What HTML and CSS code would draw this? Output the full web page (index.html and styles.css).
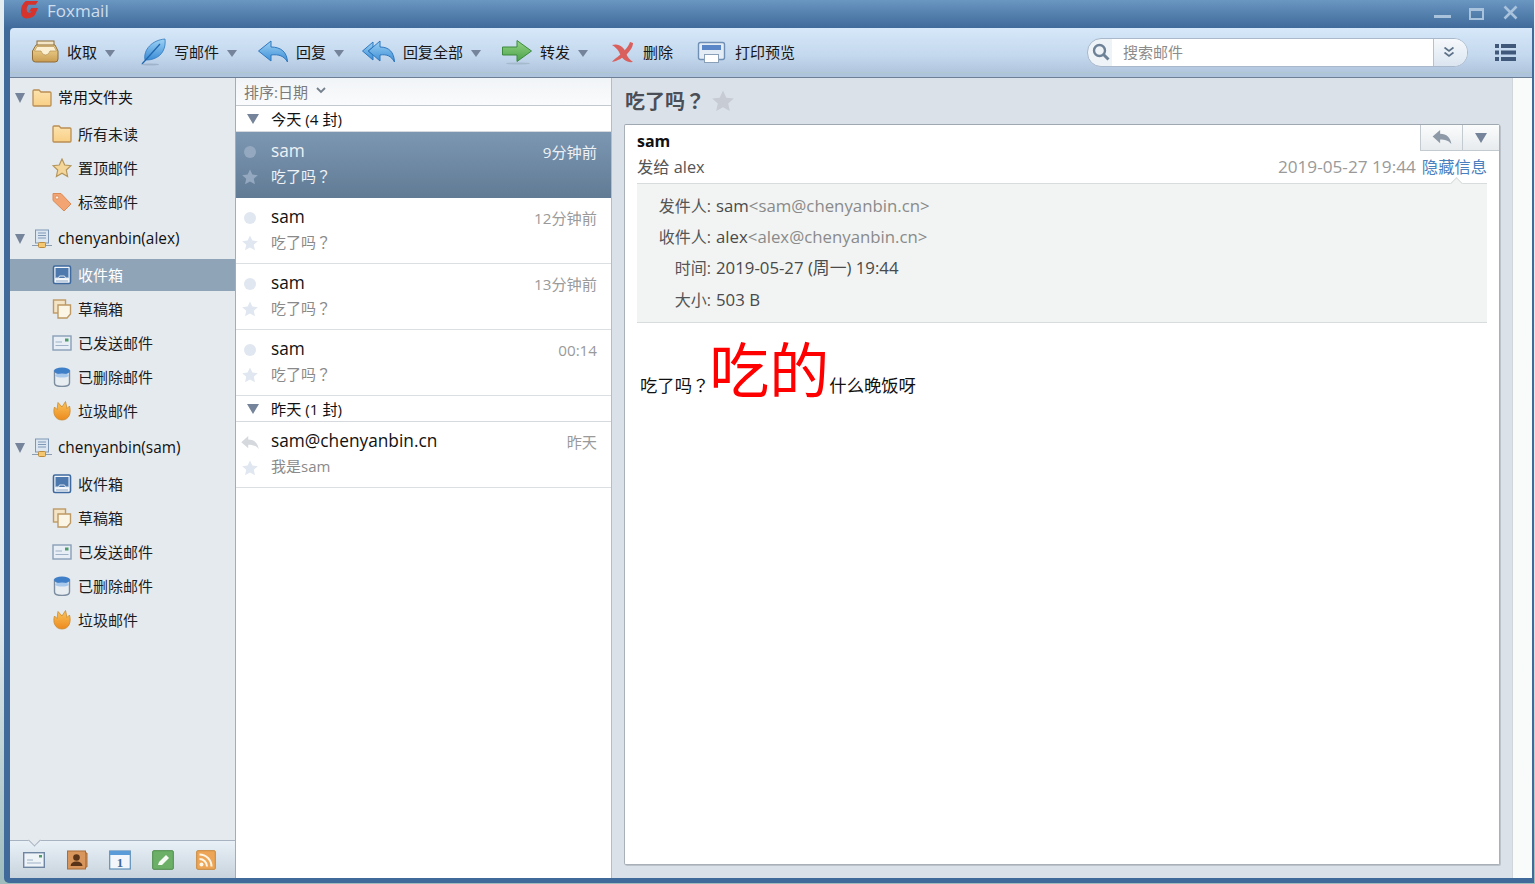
FILE: index.html
```html
<!DOCTYPE html>
<html lang="zh-CN">
<head>
	<title>Foxmail</title>
	<meta charset="utf-8">
	<link rel="stylesheet" href="styles.css">
</head>
<body>
	<svg class="sprite" aria-hidden="true">
		<defs>
			<linearGradient id="g-tan" x1="0" y1="0" x2="0" y2="1"><stop offset="0" stop-color="#f6dc98"/><stop offset="1" stop-color="#c99c52"/></linearGradient>
			<linearGradient id="g-folder" x1="0" y1="0" x2="0" y2="1"><stop offset="0" stop-color="#fde3ae"/><stop offset="1" stop-color="#f8cf85"/></linearGradient>
			<linearGradient id="g-blue" x1="0" y1="0" x2="0" y2="1"><stop offset="0" stop-color="#9dd2f4"/><stop offset="1" stop-color="#3a8cd6"/></linearGradient>
			<linearGradient id="g-green" x1="0" y1="0" x2="0" y2="1"><stop offset="0" stop-color="#93d585"/><stop offset="1" stop-color="#4aa04a"/></linearGradient>
			<linearGradient id="g-orange" x1="0" y1="0" x2="0" y2="1"><stop offset="0" stop-color="#fbc45a"/><stop offset="1" stop-color="#ec8a1e"/></linearGradient>
		</defs>
		<symbol id="t-tray" viewBox="0 0 28 28">
			<rect x="6" y="3" width="17" height="5" fill="#f3e6c6" stroke="#8f6d38"/>
			<path d="M1.500 13 L5 7 H24 L27 13 V21 Q27 24 24 24 H4.500 Q1.500 24 1.500 21Z" fill="url(#g-tan)" stroke="#8f6d38"/>
			<path d="M6 8.500 H23 L25.500 13 H19 Q18 17 14.500 17 Q11 17 10 13 H3.500Z" fill="#fbf0d2" stroke="#a98448" stroke-width=".6"/>
		</symbol>
		<symbol id="t-feather" viewBox="0 0 33 28">
			<path d="M12 22 C10 12 19 2 32 1 C33 9 30 18 20 21 C17 22 14 22 12 22Z" fill="url(#g-blue)" stroke="#2f78bf" stroke-width=".8"/>
			<path d="M9 26 L27 6" stroke="#1f66ad" stroke-width="1.200" fill="none"/>
			<ellipse cx="17" cy="26.500" rx="9" ry="1" fill="#9fb4cb"/>
		</symbol>
		<symbol id="t-reply" viewBox="0 0 33 28">
			<path d="M3.500 13 L16 3 V9 C26 9 32 14 32.500 24 C29 18 24 16 16 17 V23Z" fill="url(#g-blue)" stroke="#2f78bf"/>
		</symbol>
		<symbol id="t-replyall" viewBox="0 0 33 28">
			<path d="M.5 13 L11 4 V9 L6 13 L11 17 V22Z" fill="url(#g-blue)" stroke="#2f78bf"/>
			<path d="M6.500 13 L18 3 V9 C27 9 32 14 32.500 24 C29 18 25 16 18 17 V23Z" fill="url(#g-blue)" stroke="#2f78bf"/>
		</symbol>
		<symbol id="t-forward" viewBox="0 0 33 28">
			<path d="M3.500 9 H18 V2.500 L32.500 13 L18 23.500 V17 H3.500Z" fill="url(#g-green)" stroke="#3d8a3f"/>
			<ellipse cx="19" cy="25.500" rx="12" ry="1" fill="#a6bace"/>
		</symbol>
		<symbol id="t-delete" viewBox="0 0 29 28">
			<path d="M6 7 C13 5 18 9 20 15 C21 19 24 22 27 24 C21 25 16 21 14 16 C12 11 9 9 6 7Z" fill="#d9605d"/>
			<path d="M27 5 C27 12 17 22 6 24 C9 20 14 18 18 13 C21 10 23 7 24 4Z" fill="#d9605d"/>
		</symbol>
		<symbol id="t-print" viewBox="0 0 36 28">
			<rect x="7.500" y="4.500" width="26" height="17" rx="2" fill="#e4ecf5" stroke="#6f8fb5" stroke-width="1.400"/>
			<rect x="11" y="7" width="19" height="5" fill="#5a86c8"/>
			<rect x="13.500" y="16.500" width="14" height="8" fill="#fff" stroke="#8a9fb8"/>
		</symbol>
		<symbol id="i-folder" viewBox="0 0 20 20">
			<path d="M1 17 V3 Q1 2 2 2 H7 L9 4 H18 Q19 4 19 5 V17 Q19 18 18 18 H2 Q1 18 1 17Z" fill="url(#g-folder)" stroke="#b98f55" stroke-width="1.300"/>
		</symbol>
		<symbol id="i-star" viewBox="0 0 20 20">
			<path d="M10 1 L12.700 7 L19 7.700 L14.300 12 L15.600 18.500 L10 15.200 L4.400 18.500 L5.700 12 L1 7.700 L7.300 7Z" fill="#f4d69a" stroke="#b4965c" stroke-width="1.200"/>
		</symbol>
		<symbol id="i-tag" viewBox="0 0 20 20">
			<path d="M1 1.500 H9 L19 12 L12 19 L1 8.500Z" fill="#f2a473" stroke="#d98b58"/>
			<circle cx="5" cy="5.500" r="1.600" fill="#fff3e6" stroke="#c9794a" stroke-width=".6"/>
		</symbol>
		<symbol id="i-server" viewBox="0 0 20 20">
			<rect x="3.500" y="1" width="13" height="13" fill="#dbe6f1" stroke="#7e98b6"/>
			<path d="M6 4 H14 M6 6.500 H14 M6 9 H14" stroke="#7e98b6"/>
			<path d="M0 16.500 H20" stroke="#8b9db0"/>
			<rect x="6.500" y="13.500" width="7" height="5" rx="1" fill="#f4c873" stroke="#bb8c3d"/>
		</symbol>
		<symbol id="i-inbox" viewBox="0 0 20 20">
			<rect x="1.500" y="1" width="17" height="17.500" rx="1.500" fill="#f3f6fa" stroke="#3f6a9f" stroke-width="1.600"/>
			<rect x="3.500" y="3" width="13" height="10" fill="#4d78ad"/>
			<path d="M3.500 13 H6.500 L7.500 11 H12.500 L13.500 13 H16.500" stroke="#dbe5f0" fill="none"/>
			<path d="M4 16 H16" stroke="#8fa9c6"/>
		</symbol>
		<symbol id="i-draft" viewBox="0 0 20 20">
			<rect x="1.500" y="1" width="12" height="13" fill="#f4e4c6" stroke="#bd9964" stroke-width="1.400"/>
			<path d="M6 6 H18.500 V15 L15 19 H6Z" fill="#fbf5e6" stroke="#bd9964" stroke-width="1.400"/>
		</symbol>
		<symbol id="i-sent" viewBox="0 0 20 20">
			<rect x="1" y="3" width="18" height="14" fill="#e8eef5" stroke="#8a9fb8" stroke-width="1.400"/>
			<rect x="13" y="5.500" width="3.500" height="3" fill="#4f9a6a"/>
			<path d="M3.500 9 H10 M3.500 12.500 H16.500" stroke="#9fb2c7"/>
		</symbol>
		<symbol id="i-trash" viewBox="0 0 20 20">
			<path d="M2.500 4 V16 Q2.500 19.500 10 19.500 Q17.500 19.500 17.500 16 V4Z" fill="#e8edf2" stroke="#7c8da0" stroke-width="1.400"/>
			<ellipse cx="10" cy="4" rx="8" ry="3.400" fill="#3f7fc8"/>
			<ellipse cx="10" cy="8.500" rx="7" ry="2" fill="#a9c9ec"/>
		</symbol>
		<symbol id="i-flame" viewBox="0 0 20 20">
			<path d="M2.500 6 L5 8.500 L6 1.500 L10 6 L13.500 .5 L15 7.500 L17.500 5 C19.500 12 17 19 10 19 C3 19 .5 12 2.500 6Z" fill="url(#g-orange)" stroke="#c98a30" stroke-width=".8"/>
		</symbol>
		<symbol id="s-star" viewBox="0 0 20 20">
			<path d="M10 .5 L13 7 L19.800 7.700 L14.700 12.300 L16.200 19.200 L10 15.700 L3.800 19.200 L5.300 12.300 L.2 7.700 L7 7Z"/>
		</symbol>
		<symbol id="s-back" viewBox="0 0 20 16">
			<path d="M0 7 L8 0 V4 C15 4 19 8 20 15 C17 11 13 10 8 10 V14Z"/>
		</symbol>
	</svg>

	<div class="window">
		<header class="titlebar">
			<svg class="logo" viewBox="0 0 20 20">
				<path d="M6 1 H19 L16.500 5 H9 Q6 8.500 7.500 12 Q9.500 15 12.500 12 H9.500 L12 8.500 H19 L15.500 16 Q12 19.500 6 19.500 Q1 18.500 1 12 Q1 5 6 1Z" fill="#d5332b"/>
			</svg>
			<span class="apptitle">Foxmail</span>
			<div class="winbtns">
				<i class="win-min"></i>
				<i class="win-max"></i>
				<svg class="win-close" viewBox="0 0 15 15"><path d="M1.500 1.500 L13.500 13.500 M13.500 1.500 L1.500 13.500" stroke="#a9c3dd" stroke-width="2.600"/></svg>
			</div>
		</header>

		<div class="toolbar">
			<div class="tool"><svg class="ti w28"><use href="#t-tray"/></svg><span>收取</span><i class="caret"></i></div>
			<div class="tool"><svg class="ti w33"><use href="#t-feather"/></svg><span>写邮件</span><i class="caret"></i></div>
			<div class="tool"><svg class="ti w33"><use href="#t-reply"/></svg><span>回复</span><i class="caret"></i></div>
			<div class="tool"><svg class="ti w33"><use href="#t-replyall"/></svg><span>回复全部</span><i class="caret"></i></div>
			<div class="tool"><svg class="ti w33"><use href="#t-forward"/></svg><span>转发</span><i class="caret"></i></div>
			<div class="tool"><svg class="ti w29"><use href="#t-delete"/></svg><span>删除</span></div>
			<div class="tool"><svg class="ti w36"><use href="#t-print"/></svg><span>打印预览</span></div>
			<div class="search">
				<div class="search-ico">
					<svg viewBox="0 0 18 18"><circle cx="7.500" cy="7.500" r="5.500" fill="none" stroke="#6d8296" stroke-width="2.400"/><path d="M11.500 11.500 L16.500 16.500" stroke="#6d8296" stroke-width="3"/></svg>
				</div>
				<div class="search-input">搜索邮件</div>
				<div class="search-more">
					<svg viewBox="0 0 12 12"><path d="M1.500 1.500 L6 5 L10.500 1.500 M1.500 6.500 L6 10 L10.500 6.500" fill="none" stroke="#5b7187" stroke-width="1.600"/></svg>
				</div>
			</div>
			<svg class="menu-ico" viewBox="0 0 21 17"><path d="M0 0 H4 V4 H0Z M6 0 H21 V4 H6Z M0 6.500 H4 V10.500 H0Z M6 6.500 H21 V10.500 H6Z M0 13 H4 V17 H0Z M6 13 H21 V17 H6Z" fill="#40597a"/></svg>
		</div>

		<div class="main">
			<aside class="sidebar">
				<div class="tree">
					<div class="acct fav"><i class="tri"></i><svg class="ic"><use href="#i-folder"/></svg><span>常用文件夹</span></div>
					<div class="node"><svg class="ic"><use href="#i-folder"/></svg><span>所有未读</span></div>
					<div class="node"><svg class="ic"><use href="#i-star"/></svg><span>置顶邮件</span></div>
					<div class="node"><svg class="ic"><use href="#i-tag"/></svg><span>标签邮件</span></div>

					<div class="acct"><i class="tri"></i><svg class="ic"><use href="#i-server"/></svg><span>chenyanbin(alex)</span></div>
					<div class="node active"><svg class="ic"><use href="#i-inbox"/></svg><span>收件箱</span></div>
					<div class="node"><svg class="ic"><use href="#i-draft"/></svg><span>草稿箱</span></div>
					<div class="node"><svg class="ic"><use href="#i-sent"/></svg><span>已发送邮件</span></div>
					<div class="node"><svg class="ic"><use href="#i-trash"/></svg><span>已删除邮件</span></div>
					<div class="node"><svg class="ic"><use href="#i-flame"/></svg><span>垃圾邮件</span></div>

					<div class="acct"><i class="tri"></i><svg class="ic"><use href="#i-server"/></svg><span>chenyanbin(sam)</span></div>
					<div class="node"><svg class="ic"><use href="#i-inbox"/></svg><span>收件箱</span></div>
					<div class="node"><svg class="ic"><use href="#i-draft"/></svg><span>草稿箱</span></div>
					<div class="node"><svg class="ic"><use href="#i-sent"/></svg><span>已发送邮件</span></div>
					<div class="node"><svg class="ic"><use href="#i-trash"/></svg><span>已删除邮件</span></div>
					<div class="node"><svg class="ic"><use href="#i-flame"/></svg><span>垃圾邮件</span></div>
				</div>
				<div class="modules">
					<svg class="mod" viewBox="0 0 22 18"><rect x=".7" y="1.700" width="20.600" height="14.600" fill="#eef3f8" stroke="#6f86a3" stroke-width="1.400"/><rect x="16" y="4" width="3" height="2.500" fill="#4f9a6a"/><path d="M4 9 H10 M4 12 H18" stroke="#9fb2c7"/></svg>
					<svg class="mod" viewBox="0 0 22 20"><rect x="1.500" y="1" width="18" height="18" fill="#d9965c" stroke="#a86d38"/><path d="M19.500 3 H21 V17 H19.500" fill="#c98a52" stroke="#a86d38"/><circle cx="10.500" cy="7.500" r="3.300" fill="#5a3418"/><path d="M4.500 16 Q5 11.500 10.500 11.500 Q16 11.500 16.500 16Z" fill="#5a3418"/></svg>
					<svg class="mod" viewBox="0 0 22 20"><rect x=".7" y="1" width="20.600" height="18" fill="#f3f7fb" stroke="#5f8fb8" stroke-width="1.200"/><rect x="1" y="1" width="20" height="4" fill="#5b9bd8"/><text class="cal-num" x="11" y="17">1</text></svg>
					<svg class="mod" viewBox="0 0 22 20"><rect x=".7" y=".7" width="20.600" height="18.600" rx="1" fill="#6cb068" stroke="#4a8a48"/><path d="M6 15 L7 12 L14 5 L17 8 L10 15Z" fill="#f6fbf4"/></svg>
					<svg class="mod" viewBox="0 0 20 20"><rect x=".7" y=".7" width="18.600" height="18.600" rx="1" fill="#eda658" stroke="#c98638"/><circle cx="5.500" cy="14.500" r="2" fill="#fff6e6"/><path d="M3.500 9 A7.500 7.500 0 0 1 11 16.500 M3.500 4.500 A12 12 0 0 1 15.500 16.500" fill="none" stroke="#fff6e6" stroke-width="2"/></svg>
				</div>
			</aside>

			<section class="list">
				<div class="sortbar">排序:日期<svg viewBox="0 0 10 7"><path d="M1 1 L5 5 L9 1" fill="none" stroke="#75808c" stroke-width="1.800"/></svg></div>

				<div class="group"><i class="tri"></i><span>今天 (4 封)</span></div>
				<div class="msg selected">
					<div class="msg-marks"><i class="dot"></i><svg class="star"><use href="#s-star"/></svg></div>
					<div class="msg-text"><div class="from">sam</div><div class="subj q" lang="zh-TW">吃了吗？</div></div>
					<div class="when">9分钟前</div>
				</div>
				<div class="msg">
					<div class="msg-marks"><i class="dot"></i><svg class="star"><use href="#s-star"/></svg></div>
					<div class="msg-text"><div class="from">sam</div><div class="subj q" lang="zh-TW">吃了吗？</div></div>
					<div class="when">12分钟前</div>
				</div>
				<div class="msg">
					<div class="msg-marks"><i class="dot"></i><svg class="star"><use href="#s-star"/></svg></div>
					<div class="msg-text"><div class="from">sam</div><div class="subj q" lang="zh-TW">吃了吗？</div></div>
					<div class="when">13分钟前</div>
				</div>
				<div class="msg">
					<div class="msg-marks"><i class="dot"></i><svg class="star"><use href="#s-star"/></svg></div>
					<div class="msg-text"><div class="from">sam</div><div class="subj q" lang="zh-TW">吃了吗？</div></div>
					<div class="when">00:14</div>
				</div>

				<div class="group"><i class="tri"></i><span>昨天 (1 封)</span></div>
				<div class="msg">
					<div class="msg-marks"><svg class="replied"><use href="#s-back"/></svg><svg class="star"><use href="#s-star"/></svg></div>
					<div class="msg-text"><div class="from">sam@chenyanbin.cn</div><div class="subj">我是sam</div></div>
					<div class="when">昨天</div>
				</div>
			</section>

			<section class="reader">
				<div class="reader-head">
					<h1 class="q" lang="zh-TW">吃了吗？</h1>
					<svg class="head-star"><use href="#s-star"/></svg>
				</div>
				<article class="card">
					<div class="card-top">
						<b class="sender">sam</b>
						<div class="card-actions">
							<div class="act act-reply"><svg><use href="#s-back"/></svg></div>
							<div class="act act-more"><i></i></div>
						</div>
					</div>
					<div class="card-meta">
						<span>发给 alex</span>
						<span class="stamp">2019-05-27 19:44</span>
						<a class="hide-link">隐藏信息</a>
					</div>
					<div class="details">
						<span class="k">发件人:</span><span class="v">sam<em>&lt;sam@chenyanbin.cn&gt;</em></span>
						<span class="k">收件人:</span><span class="v">alex<em>&lt;alex@chenyanbin.cn&gt;</em></span>
						<span class="k">时间:</span><span class="v">2019-05-27 (周一) 19:44</span>
						<span class="k">大小:</span><span class="v">503 B</span>
					</div>
					<p class="mailbody"><span class="q" lang="zh-TW">吃了吗？</span><span class="big">吃的</span>什么晚饭呀</p>
				</article>
			</section>

			<div class="edge"></div>
		</div>
	</div>
</body>
</html>
```

FILE: styles.css
```css
html, body {
	margin: 0;
	padding: 0;
	height: 100%;
	overflow: hidden;
}

body {
	font-family: "Open Sans", "Noto Sans CJK SC", sans-serif;
	font-size: 15px;
	color: #1c1c1c;
	background: linear-gradient(#e6edf1 0%, #dfe8ec 70%, #9fbdbd 100%);
}

.sprite {
	display: block;
	width: 0;
	height: 0;
}

/* full width question mark sits in the middle of its cell in this face */
.q {
	font-family: "Open Sans", "Noto Sans CJK TC", sans-serif;
}

.window {
	width: 1530px;
	height: 883px;
	margin-left: 4px;
	display: flex;
	flex-direction: column;
	background: #3f6a9a;
	border-bottom-left-radius: 5px;
	box-sizing: border-box;
	padding: 0 2px 5px 6px;
}

/* title bar */
.titlebar {
	height: 28px;
	margin: 0 -2px 0 -6px;
	padding-left: 16px;
	display: flex;
	align-items: flex-start;
	background: linear-gradient(#6a96c2, #3f6a9a);
	flex: none;
}
.logo {
	width: 19px;
	height: 19px;
	margin-top: 0;
}
.apptitle {
	margin-left: 8px;
	font-size: 17px;
	line-height: 22px;
	color: #cfdeec;
}
.winbtns {
	margin-left: auto;
	margin-right: 16px;
	display: flex;
	align-items: flex-start;
}
.win-min {
	width: 17px;
	height: 3px;
	margin-top: 15px;
	background: #a9c3dd;
}
.win-max {
	width: 11px;
	height: 7px;
	margin: 8px 0 0 18px;
	border: 2px solid #a9c3dd;
	border-top-width: 3px;
}
.win-close {
	width: 15px;
	height: 15px;
	margin: 5px 0 0 19px;
}

/* toolbar */
.toolbar {
	height: 50px;
	flex: none;
	box-sizing: border-box;
	display: flex;
	align-items: center;
	padding-left: 21px;
	padding-bottom: 1px;
	border-top-left-radius: 4px;
	border-bottom: 1px solid #6d7f94;
	background: linear-gradient(#d6e8f9 0%, #c4d8ee 55%, #b2c6de 89%, #b4cbc9 90%, #aec3dc 92%, #aec3dc 100%);
}
.tool {
	display: flex;
	align-items: center;
	margin-right: 18px;
	line-height: 20px;
	color: #161616;
}
.tool span {
	margin-left: 8px;
}
.ti {
	height: 28px;
	flex: none;
}
.w28 { width: 28px; }
.w29 { width: 29px; }
.w33 { width: 33px; }
.w36 { width: 36px; }
.caret {
	width: 0;
	height: 0;
	margin-left: 8px;
	margin-top: 2px;
	border-left: 5px solid transparent;
	border-right: 5px solid transparent;
	border-top: 7px solid #75849a;
}

.search {
	margin-left: auto;
	margin-right: 27px;
	width: 381px;
	height: 29px;
	box-sizing: border-box;
	display: flex;
	border: 1px solid #a9b9cb;
	border-radius: 14px;
	overflow: hidden;
	background: #eef3f8;
}
.search-ico {
	width: 24px;
	display: flex;
	align-items: center;
	justify-content: center;
	padding-left: 2px;
	box-sizing: border-box;
}
.search-ico svg {
	width: 18px;
	height: 18px;
}
.search-input {
	flex: 1;
	padding-left: 11px;
	background: #fff;
	color: #8b8b8b;
	line-height: 27px;
}
.search-more {
	width: 34px;
	box-sizing: border-box;
	padding-right: 4px;
	display: flex;
	align-items: center;
	justify-content: center;
	border-left: 1px solid #b3c1d0;
	background: linear-gradient(#f6f9fc, #dbe5f0);
}
.search-more svg {
	width: 12px;
	height: 12px;
}
.menu-ico {
	width: 21px;
	height: 17px;
	margin-right: 16px;
}

/* three panes */
.main {
	flex: 1;
	display: flex;
	min-height: 0;
	background: #fff;
}

.sidebar {
	width: 226px;
	flex: none;
	box-sizing: border-box;
	display: flex;
	flex-direction: column;
	background: #e5eaef;
	border-right: 1px solid #a3adb8;
}
.tree {
	flex: 1;
}
.acct {
	height: 39px;
	display: flex;
	align-items: center;
	padding-left: 5px;
	color: #111;
	font-size: 15.400px;
}
.acct.fav {
	font-size: 15px;
}
.acct.fav span {
	margin-top: -2px;
}
.acct .tri {
	margin-right: 7px;
	border-left-width: 5.500px;
	border-right-width: 5.500px;
}
.acct span,
.node span {
	margin-left: 6px;
	line-height: 20px;
}
.ic {
	width: 20px;
	height: 20px;
	flex: none;
}
.node {
	height: 34px;
	display: flex;
	align-items: center;
	padding-left: 42px;
	box-sizing: border-box;
	color: #1c1c1c;
}
.node.active {
	background: #90a4b7;
	background-clip: content-box;
	padding: 1px 0 1px 0;
	color: #fff;
}
.node.active .ic {
	margin-left: 42px;
}

.tri {
	display: block;
	flex: none;
	width: 0;
	height: 0;
	border-left: 6px solid transparent;
	border-right: 6px solid transparent;
	border-top: 10px solid #75849a;
}

.modules {
	height: 38px;
	flex: none;
	box-sizing: border-box;
	position: relative;
	display: flex;
	align-items: center;
	padding-left: 13px;
	border-top: 1px solid #a7b3c0;
	background: linear-gradient(#e9f1f7, #c8d3dd);
}
/* little notch over the active module */
.modules::before {
	content: "";
	position: absolute;
	left: 20px;
	top: -1px;
	width: 8px;
	height: 8px;
	background: #e5eaef;
	border-right: 1px solid #a7b3c0;
	border-bottom: 1px solid #a7b3c0;
	transform: rotate(45deg) translate(-3px, -3px);
}
.mod {
	flex: none;
	width: 22px;
	height: 20px;
	margin-right: 21px;
}
.cal-num {
	font-family: "Liberation Serif", serif;
	font-size: 13px;
	font-weight: bold;
	fill: #3f6a9a;
	text-anchor: middle;
}

/* message list */
.list {
	width: 376px;
	flex: none;
	box-sizing: border-box;
	background: #fff;
	border-right: 1px solid #b4bcc5;
}
.sortbar {
	height: 28px;
	box-sizing: border-box;
	display: flex;
	align-items: center;
	padding-left: 8px;
	font-size: 15px;
	color: #7b7b7b;
	border-bottom: 1px solid #c3c9cf;
	background: linear-gradient(#f1f4f7, #fafbfc);
}
.sortbar svg {
	width: 10px;
	height: 7px;
	margin: 0 0 3px 8px;
}
.group {
	height: 26px;
	box-sizing: border-box;
	display: flex;
	align-items: center;
	padding-left: 11px;
	border-bottom: 1px solid #d6dade;
	font-size: 15.200px;
	line-height: 20px;
	color: #111;
}
.group span {
	margin-left: 12px;
}
.msg {
	height: 66px;
	box-sizing: border-box;
	display: flex;
	padding-right: 14px;
	border-bottom: 1px solid #dcdfe2;
}
.msg-marks {
	width: 28px;
	margin-right: 7px;
	flex: none;
	display: flex;
	flex-direction: column;
	align-items: center;
}
.dot {
	display: block;
	width: 12px;
	height: 12px;
	margin-top: 14px;
	border-radius: 50%;
	background: #e0e7f0;
}
.star {
	width: 16px;
	height: 16px;
	margin-top: 11px;
	fill: #e0e7f0;
}
.replied {
	width: 18px;
	height: 14px;
	margin-top: 14px;
	margin-bottom: -1px;
	fill: #d5d9dd;
}
.msg-text {
	flex: 1;
	min-width: 0;
}
.from {
	margin-top: 8px;
	font-size: 17.300px;
	line-height: 22px;
	color: #111;
}
.subj {
	margin-top: 3px;
	font-size: 15px;
	line-height: 22px;
	color: #8a8a8a;
}
.when {
	margin-top: 9px;
	font-size: 15.200px;
	line-height: 22px;
	color: #9a9a9a;
}
.msg.selected {
	border-bottom: 0;
	background: linear-gradient(#7c97b2, #617b95);
}
.msg.selected .from,
.msg.selected .subj,
.msg.selected .when {
	color: #eef2f6;
}
.msg.selected .dot {
	background: #94a9c0;
}
.msg.selected .star {
	fill: #94a9c0;
}

/* reading pane */
.reader {
	flex: 1;
	min-width: 0;
	box-sizing: border-box;
	display: flex;
	flex-direction: column;
	padding: 0 12px 13px 12px;
	background: #dbe1e9;
}
.reader-head {
	height: 46px;
	flex: none;
	display: flex;
	align-items: center;
}
.reader-head h1 {
	margin: 2px 0 0 1px;
	font-size: 20px;
	line-height: 44px;
	font-weight: bold;
	color: #4a4f57;
}
.head-star {
	width: 22px;
	height: 22px;
	margin-left: 7px;
	fill: #c6cbd4;
}
.card {
	flex: 1;
	min-height: 0;
	box-sizing: border-box;
	padding: 0 12px;
	background: #fff;
	border: 1px solid #a9b0b8;
	border-top-color: #9fa7b0;
	border-radius: 2px;
	box-shadow: 1px 1px 0 #bcc2c9;
}
.card-top {
	height: 26px;
	display: flex;
	margin-right: -12px;
}
.sender {
	margin-top: 5px;
	font-size: 16px;
	line-height: 22px;
	color: #111;
}
.card-actions {
	margin-left: auto;
	display: flex;
}
.act {
	box-sizing: border-box;
	height: 26px;
	display: flex;
	align-items: center;
	justify-content: center;
	border-left: 1px solid #c3cad0;
	border-bottom: 1px solid #c3cad0;
	background: linear-gradient(#fbfcfc, #e7ebee);
}
.act-reply {
	width: 42px;
}
.act-reply svg {
	width: 20px;
	height: 15px;
	fill: #8d99a6;
}
.act-more {
	width: 37px;
}
.act-more i {
	width: 0;
	height: 0;
	border-left: 6px solid transparent;
	border-right: 6px solid transparent;
	border-top: 10px solid #75849a;
}
.card-meta {
	height: 32px;
	box-sizing: border-box;
	display: flex;
	align-items: center;
	font-size: 16.300px;
	line-height: 20px;
	color: #555;
}
.stamp {
	margin-left: auto;
	font-size: 17.200px;
	color: #9a9a9a;
}
.hide-link {
	margin-left: 6px;
	color: #4a80bd;
}
.details {
	position: relative;
	box-sizing: border-box;
	height: 140px;
	display: grid;
	grid-template-columns: 74px 1fr;
	grid-auto-rows: 31.300px;
	column-gap: 5px;
	align-items: center;
	align-content: start;
	padding-top: 6px;
	border-top: 1px solid #d8dcdc;
	border-bottom: 1px solid #d8dcdc;
	background: #f1f4f3;
	color: #555;
	font-size: 16px;
	line-height: 20px;
}
/* pointer under the hide link */
.details::before {
	content: "";
	position: absolute;
	right: 26px;
	top: -5px;
	width: 8px;
	height: 8px;
	background: #f1f4f3;
	border-left: 1px solid #d8dcdc;
	border-top: 1px solid #d8dcdc;
	transform: rotate(45deg);
}
.k {
	text-align: right;
}
.v {
	font-size: 16.800px;
	color: #4a4a4a;
}
.v em {
	font-style: normal;
	color: #8a8a8a;
}
.mailbody {
	margin: 13px 0 0 3px;
	font-size: 17.330px;
	line-height: 68px;
	color: #111;
	white-space: nowrap;
}
.big {
	font-size: 60px;
	color: #ff0000;
	vertical-align: -1px;
}

.edge {
	width: 20px;
	flex: none;
	box-sizing: border-box;
	background: #f9fbfa;
	border-left: 1px solid #cfd5d9;
}
```
